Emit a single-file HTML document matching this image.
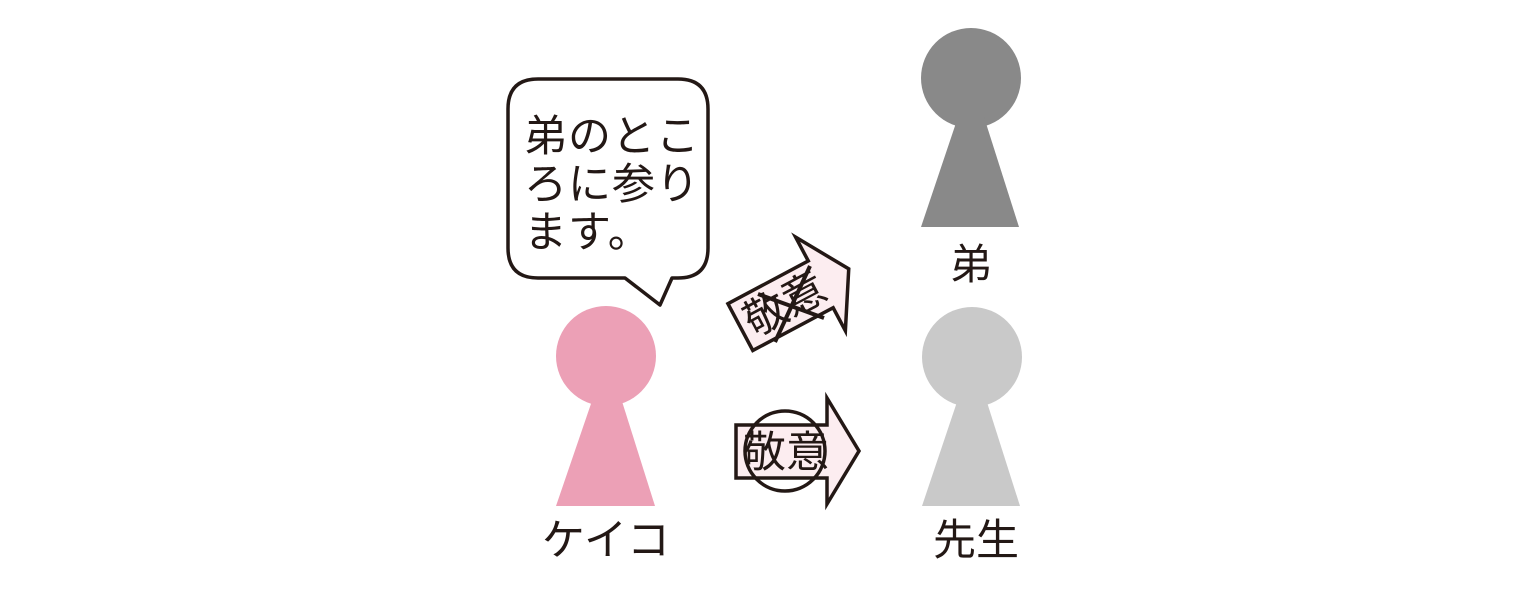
<!DOCTYPE html>
<html><head><meta charset="utf-8"><style>
html,body{margin:0;padding:0;background:#fff;}
svg{display:block}
text{font-family:"Liberation Sans","Noto Sans CJK JP",sans-serif;fill:#231815}
</style></head><body>
<svg width="1536" height="591" viewBox="0 0 1536 591">
<path d="M538 79 H678 Q708 79 708 109 V248 Q708 278 678 278 H672 L660 305 L625 278 H538 Q508 278 508 248 V109 Q508 79 538 79 Z" fill="#fff" stroke="#231815" stroke-width="3.5" stroke-linejoin="round"/>
<text x="524" y="151" font-size="43" letter-spacing="1">弟のとこ</text>
<text x="524" y="199" font-size="43" letter-spacing="1">ろに参り</text>
<text x="524" y="247" font-size="43" letter-spacing="1">ます。</text>
<circle cx="606" cy="356" r="50" fill="#eca0b6"/>
<path d="M594 395 H620 L655 506 H556 Z" fill="#eca0b6"/>
<text x="606" y="555" font-size="43" text-anchor="middle">ケイコ</text>
<circle cx="971" cy="78" r="50" fill="#898989"/>
<path d="M958 117 H984 L1019 227 H921 Z" fill="#898989"/>
<text x="971" y="279" font-size="42" text-anchor="middle">弟</text>
<circle cx="972" cy="357" r="50" fill="#c9c9c9"/>
<path d="M959 396 H985 L1020 506 H922 Z" fill="#c9c9c9"/>
<text x="976" y="555" font-size="43" text-anchor="middle">先生</text>
<path d="M736 425 H827 V398 L859 451 L827 504 V478 H736 Z" fill="#fcedf0" stroke="#231815" stroke-width="3.5"/>
<text x="786" y="467" font-size="43" text-anchor="middle">敬意</text>
<circle cx="785" cy="451" r="40" fill="none" stroke="#231815" stroke-width="3.5"/>
<g transform="translate(794,298) rotate(-28) translate(-797,-451)">
<path d="M736 425 H827 V398 L859 451 L827 504 V478 H736 Z" fill="#fcedf0" stroke="#231815" stroke-width="3.5"/>
<text x="786" y="467" font-size="43" text-anchor="middle">敬意</text>
</g>
<line x1="758" y1="294" x2="824" y2="318" stroke="#231815" stroke-width="4"/>
<line x1="775" y1="342" x2="810" y2="266" stroke="#231815" stroke-width="4"/>
</svg>
</body></html>
